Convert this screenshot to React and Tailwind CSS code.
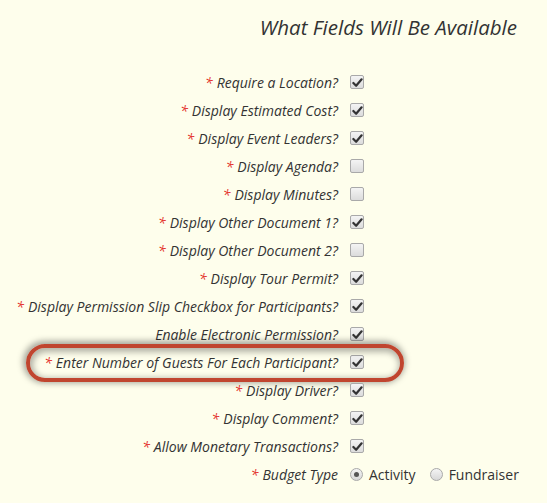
const rows = [
  { label: 'Require a Location?', req: true, checked: true },
  { label: 'Display Estimated Cost?', req: true, checked: true },
  { label: 'Display Event Leaders?', req: true, checked: true },
  { label: 'Display Agenda?', req: true, checked: false },
  { label: 'Display Minutes?', req: true, checked: false },
  { label: 'Display Other Document 1?', req: true, checked: true },
  { label: 'Display Other Document 2?', req: true, checked: false },
  { label: 'Display Tour Permit?', req: true, checked: true },
  { label: 'Display Permission Slip Checkbox for Participants?', req: true, checked: true },
  { label: 'Enable Electronic Permission?', req: false, checked: true },
  { label: 'Enter Number of Guests For Each Participant?', req: true, checked: true, circled: true },
  { label: 'Display Driver?', req: true, checked: true },
  { label: 'Display Comment?', req: true, checked: true },
  { label: 'Allow Monetary Transactions?', req: true, checked: true },
];

const Checkbox = ({ checked }) => (
  <span className="w-[14px] h-[14px] shrink-0 rounded-[2px] border border-[#a9a9a9] bg-gradient-to-b from-[#f4f4f4] to-[#dcdcdc] flex items-center justify-center">
    {checked && (
      <svg viewBox="0 0 12 12" className="w-[11px] h-[11px]">
        <path d="M1.5 6.5 L4.5 9.5 L10.5 2.5" fill="none" stroke="#333" strokeWidth="2.4" strokeLinecap="round" strokeLinejoin="round" />
      </svg>
    )}
  </span>
);

const Radio = ({ checked }) => (
  <span className="w-[13px] h-[13px] shrink-0 rounded-full border border-[#a9a9a9] bg-gradient-to-b from-[#f4f4f4] to-[#d8d8d8] flex items-center justify-center">
    {checked && <span className="w-[5px] h-[5px] rounded-full bg-[#555]" />}
  </span>
);

const Label = ({ req, children }) => (
  <span className="w-[338px] shrink-0 text-right italic text-[#333] whitespace-nowrap">
    {req && <span className="text-[#e4312b] mr-[4px]">*</span>}
    {children}
  </span>
);

export default function App() {
  return (
    <div className="w-[547px] h-[503px] bg-[#fefeec] overflow-hidden" style={{ fontFamily: '"Open Sans", sans-serif' }}>
      <div className="flex justify-end pr-[30px] pt-[12px] h-[68px]">
        <h2 className="italic text-[20.5px] text-[#333]">What Fields Will Be Available</h2>
      </div>
      <div className="text-[14px]">
        {rows.map((r) => (
          <div key={r.label} className="relative flex items-center h-[28px] gap-[12px]">
            <Label req={r.req}>{r.label}</Label>
            <Checkbox checked={r.checked} />
            {r.circled && (
              <span className="absolute left-[26px] top-[-4px] w-[378px] h-[38px] rounded-full border-[4px] border-[#c0452f] shadow-[-1px_-1px_6px_2px_rgba(0,0,0,0.35),inset_1px_2px_6px_2px_rgba(0,0,0,0.3)]" />
            )}
          </div>
        ))}
        <div className="flex items-center h-[28px] gap-[12px]">
          <Label req>Budget Type</Label>
          <span className="flex items-center gap-[6px] not-italic text-[14px] text-[#333]">
            <Radio checked />
            <span>Activity</span>
            <span className="w-[2px]" />
            <Radio />
            <span>Fundraiser</span>
          </span>
        </div>
      </div>
    </div>
  );
}
